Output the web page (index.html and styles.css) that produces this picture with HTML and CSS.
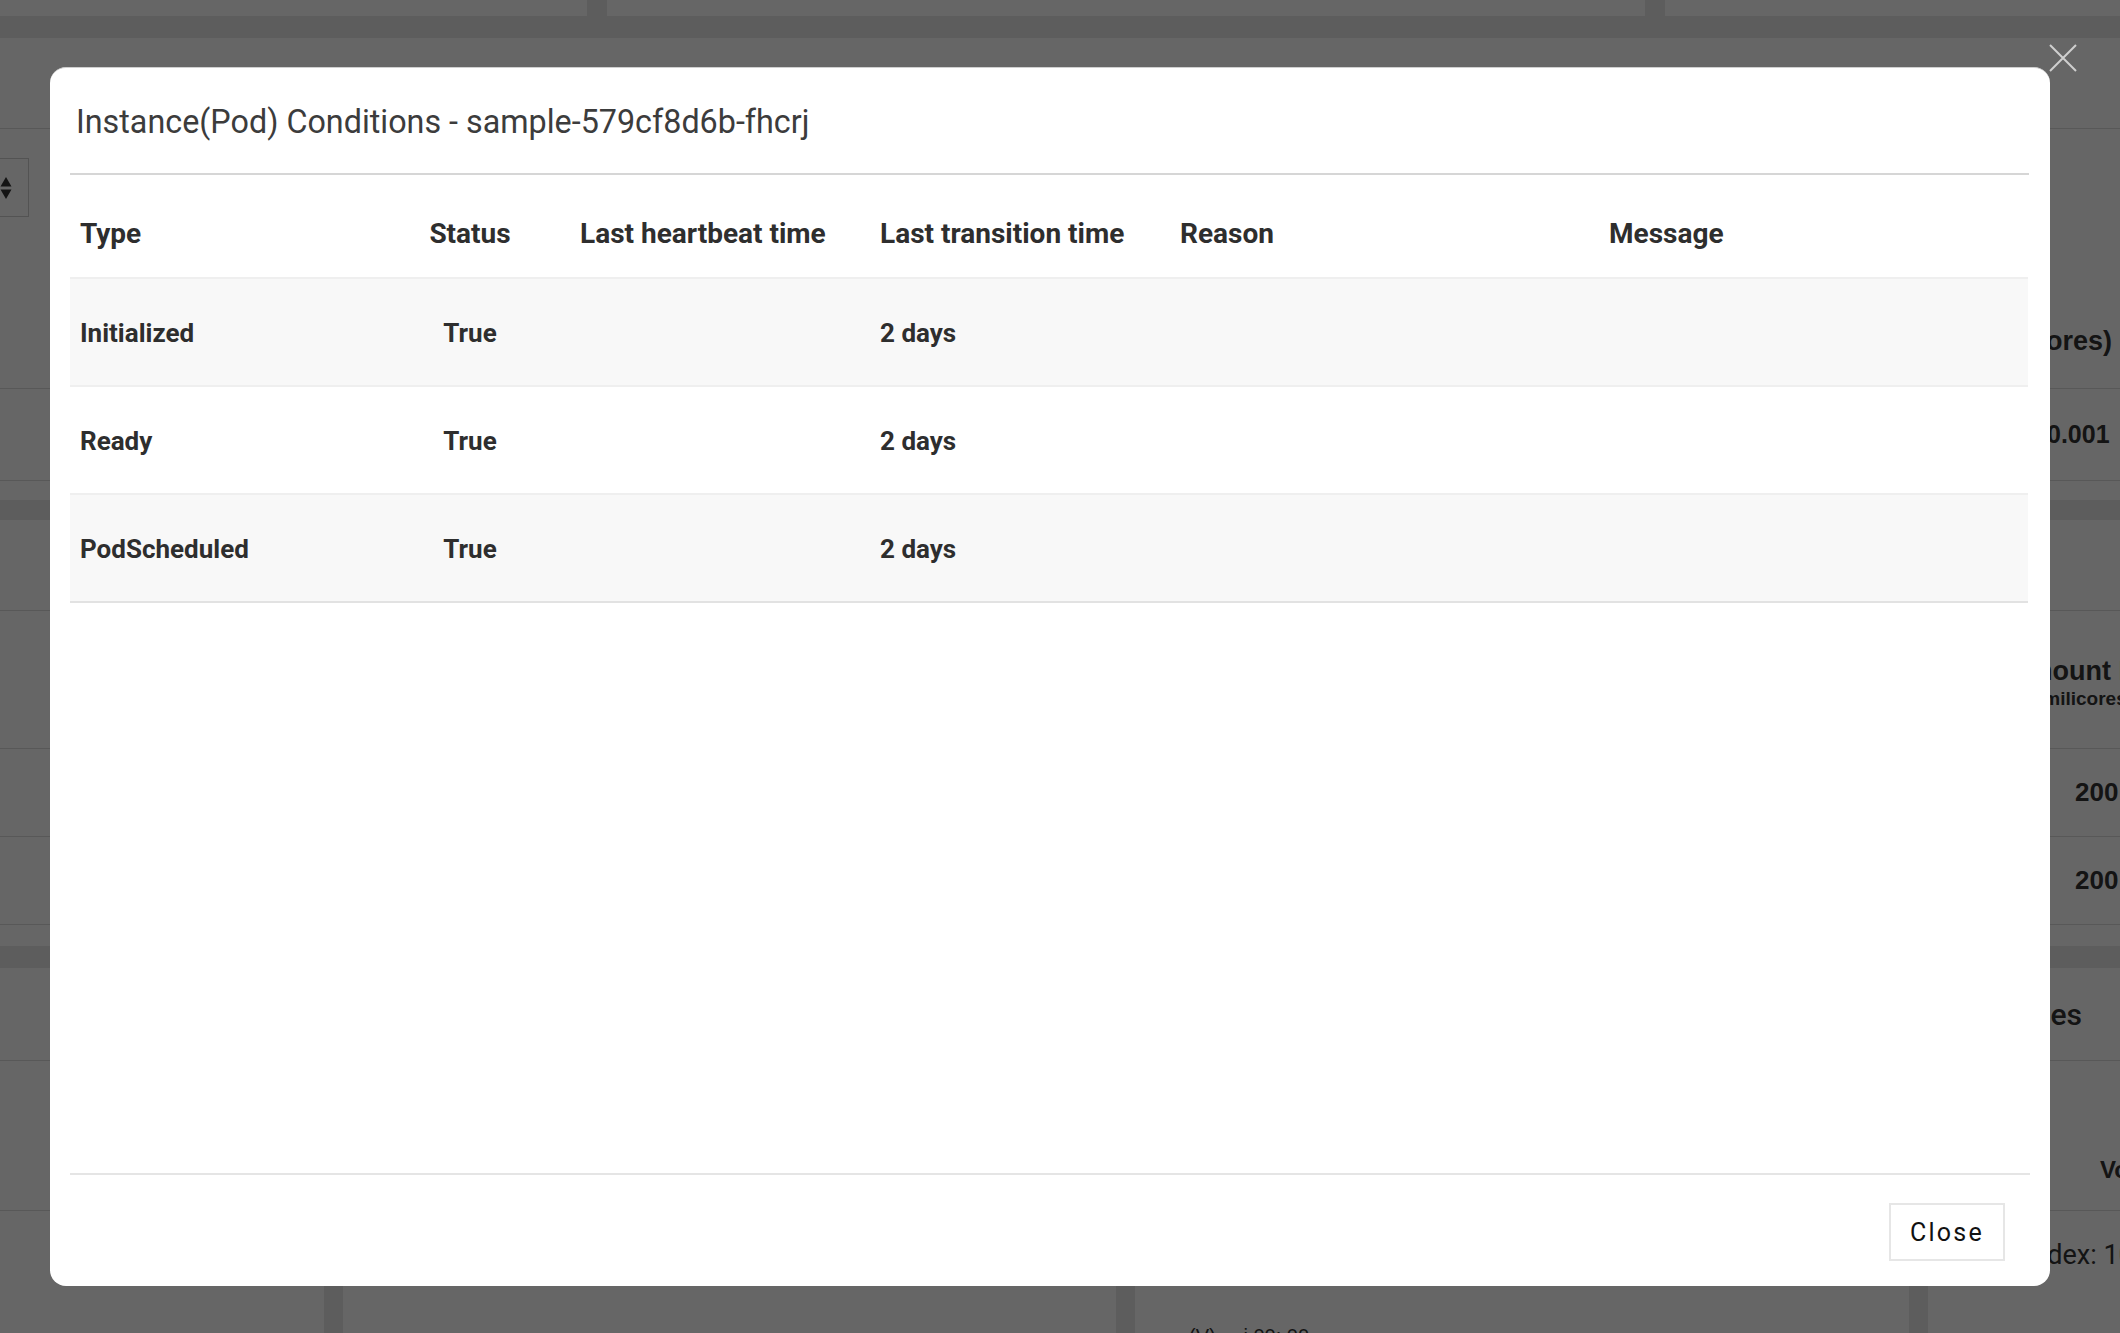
FILE: index.html
```html
<!DOCTYPE html>
<html lang="en">
<head>
<meta charset="utf-8">
<title>Instance(Pod) Conditions</title>
<link rel="stylesheet" href="styles.css">
</head>
<body>
<div class="page">
  <div class="top-cards">
    <div class="card"></div>
    <div class="card"></div>
    <div class="card"></div>
  </div>

  <section class="card sec sec-a">
    <div class="sec-head"></div>
    <div class="sec-tools">
      <div class="select-box">
        <svg class="sort-ico" width="12" height="24" viewBox="0 0 12 24"><path d="M6 1 L11.5 10.5 L0.5 10.5 Z M0.5 13.5 L11.5 13.5 L6 23 Z" fill="#333"/></svg>
      </div>
      <div class="bg-th">CPU Usage (milicores)</div>
    </div>
    <div class="bg-row"><span class="bg-num">0.001</span></div>
  </section>

  <section class="card sec sec-b">
    <div class="sec-head"></div>
    <div class="bg-thead">
      <div class="bg-th2">Amount Requests</div>
      <div class="bg-sub">(milicores)</div>
    </div>
    <div class="bg-row b-row"><span class="bg-num">200</span></div>
    <div class="bg-row b-row"><span class="bg-num">200</span></div>
  </section>

  <section class="card sec sec-c">
    <div class="sec-head c-head"><span class="bg-title">Volumes</span></div>
    <div class="c-thead"><span class="bg-vol">Volume</span></div>
    <div class="c-grid">
      <div class="cell"></div>
      <div class="cell"></div>
      <div class="cell"><span class="bg-small">(V) ... i 00: 00</span></div>
      <div class="cell"><span class="bg-index">Index: 10</span></div>
    </div>
  </section>
</div>

<div class="backdrop"></div>

<button class="x-close" aria-label="Close">
  <svg width="28" height="28" viewBox="0 0 28 28"><path d="M1 1 L27 27 M27 1 L1 27" stroke="#cfcfcf" stroke-width="2" fill="none"/></svg>
</button>

<div class="modal" role="dialog">
  <div class="modal-header">
    <h4 class="modal-title">Instance(Pod) Conditions - sample-579cf8d6b-fhcrj</h4>
  </div>
  <div class="modal-body">
    <table class="cond-table">
      <colgroup>
        <col class="c1"><col class="c2"><col class="c3"><col class="c4"><col class="c5"><col class="c6">
      </colgroup>
      <thead>
        <tr>
          <th>Type</th>
          <th class="center">Status</th>
          <th>Last heartbeat time</th>
          <th>Last transition time</th>
          <th>Reason</th>
          <th>Message</th>
        </tr>
      </thead>
      <tbody>
        <tr class="odd">
          <td>Initialized</td><td class="center">True</td><td></td><td>2 days</td><td></td><td></td>
        </tr>
        <tr>
          <td>Ready</td><td class="center">True</td><td></td><td>2 days</td><td></td><td></td>
        </tr>
        <tr class="odd">
          <td>PodScheduled</td><td class="center">True</td><td></td><td>2 days</td><td></td><td></td>
        </tr>
      </tbody>
    </table>
  </div>
  <div class="modal-footer">
    <button class="btn-close">Close</button>
  </div>
</div>
</body>
</html>
```

FILE: styles.css
```css
* { box-sizing: border-box; }

html, body {
  margin: 0;
  padding: 0;
}

body {
  width: 2120px;
  height: 1333px;
  overflow: hidden;
  position: relative;
  background: #e8e8e8;
  font-family: Roboto, "Liberation Sans", Arial, sans-serif;
  color: #333;
}

/* ---------- underlying page ---------- */
.page {
  display: flex;
  flex-direction: column;
  width: 2120px;
  height: 1333px;
  overflow: hidden;
}

.card { background: #fff; }

.top-cards {
  display: grid;
  grid-template-columns: 587px 1038px 1fr;
  column-gap: 20px;
  height: 16px;
  margin-bottom: 22px;
  flex: none;
}

.sec {
  display: flex;
  flex-direction: column;
  overflow: hidden;
  font-family: "Liberation Sans", Arial, sans-serif;
  color: #333;
}

.sec-a { height: 462px; margin-bottom: 20px; flex: none; }
.sec-b { height: 426px; margin-bottom: 22px; flex: none; }
.sec-c { flex: 1; }

.sec-head {
  height: 91px;
  border-bottom: 1px solid #dcdcdc;
  flex: none;
}

.sec-tools {
  height: 260px;
  border-bottom: 1px solid #dcdcdc;
  display: flex;
  flex-direction: column;
  justify-content: space-between;
  padding: 29px 8px 32px 0;
  flex: none;
}

.select-box {
  width: 89px;
  height: 59px;
  margin-left: -60px;
  border: 1px solid #cfcfcf;
  display: flex;
  align-items: center;
  padding-left: 59px;
}

.sort-ico { display: block; }

.bg-th {
  align-self: flex-end;
  font-weight: 700;
  font-size: 27px;
  line-height: 30px;
}

.bg-row {
  height: 92px;
  border-bottom: 1px solid #dcdcdc;
  display: flex;
  align-items: center;
  padding-left: 2047px;
  flex: none;
  overflow: hidden;
}

.bg-num {
  font-size: 25px;
  font-weight: 700;
  white-space: nowrap;
}

.bg-thead {
  height: 138px;
  border-bottom: 1px solid #dcdcdc;
  display: flex;
  flex-direction: column;
  padding-top: 44px;
  flex: none;
  overflow: hidden;
}

.bg-th2 {
  font-weight: 700;
  font-size: 27px;
  line-height: 32px;
  padding-left: 2009px;
  white-space: nowrap;
}

.bg-sub {
  font-weight: 700;
  font-size: 19px;
  line-height: 24px;
  padding-left: 2037px;
  white-space: nowrap;
}

.b-row { height: 88px; padding-left: 2075px; }
.b-row .bg-num { font-size: 26px; }

.c-head {
  height: 93px;
  display: flex;
  align-items: center;
  justify-content: flex-end;
  padding-right: 38px;
}

.bg-title {
  font-family: Roboto, sans-serif;
  font-weight: 500;
  font-size: 30px;
}

.c-thead {
  height: 150px;
  border-bottom: 1px solid #dcdcdc;
  display: flex;
  align-items: flex-end;
  padding-bottom: 26px;
  padding-left: 2100px;
  flex: none;
  overflow: hidden;
}

.bg-vol {
  font-weight: 700;
  font-size: 24px;
  white-space: nowrap;
}

.c-grid {
  flex: 1;
  display: grid;
  grid-template-columns: 324px 773px 774px 1fr;
  column-gap: 19px;
  background: #e8e8e8;
}

.cell {
  background: #fff;
  overflow: hidden;
  padding-top: 28px;
}

.cell:nth-child(3) { padding: 114px 0 0 54px; }
.cell:nth-child(4) { padding-left: 97px; }

.bg-small {
  font-size: 20px;
  white-space: nowrap;
}

.bg-index {
  font-family: Roboto, sans-serif;
  font-size: 27px;
  white-space: nowrap;
}

/* ---------- overlay ---------- */
.backdrop {
  position: absolute;
  inset: 0;
  background: rgba(0, 0, 0, 0.6);
}

.x-close {
  position: absolute;
  left: 2049px;
  top: 44px;
  width: 28px;
  height: 28px;
  padding: 0;
  border: 0;
  background: transparent;
}

.x-close svg { display: block; }

.modal {
  position: absolute;
  left: 50px;
  top: 67px;
  width: 2000px;
  height: 1219px;
  background: #fff;
  border-radius: 16px;
  border-top: 1px solid #cfcfcf;
  display: flex;
  flex-direction: column;
}

.modal-header {
  margin: 0 21px 0 20px;
  height: 107px;
  border-bottom: 2px solid #d6d6d6;
  display: flex;
  align-items: center;
  padding: 3px 6px 0;
  flex: none;
}

.modal-title {
  margin: 0;
  font-family: Roboto, sans-serif;
  font-weight: 400;
  font-size: 32.3px;
  color: #3c3c3c;
}

.modal-body {
  flex: 1;
  padding: 12px 22px 0 20px;
}

.cond-table {
  width: 100%;
  table-layout: fixed;
  border-collapse: separate;
  border-spacing: 0;
  font-family: Roboto, sans-serif;
  color: #2e2e2e;
}

.c1 { width: 300px; }
.c2 { width: 200px; }
.c3 { width: 300px; }
.c4 { width: 300px; }
.c5 { width: 429px; }
.c6 { width: auto; }

.cond-table th {
  height: 92px;
  padding: 2px 10px 0;
  text-align: left;
  font-size: 28px;
  font-weight: 700;
  border-bottom: 2px solid #efefef;
  white-space: nowrap;
}

.cond-table td {
  height: 108px;
  padding: 2px 10px 0;
  font-size: 26px;
  font-weight: 700;
  border-bottom: 2px solid #efefef;
  white-space: nowrap;
}

.cond-table tbody tr:last-child td { border-bottom-color: #e2e2e2; }

.cond-table tr.odd td { background: #f8f8f8; }

.cond-table .center { text-align: center; }

.modal-footer {
  margin: 0 20px;
  border-top: 2px solid #e5e5e5;
  height: 113px;
  display: flex;
  justify-content: flex-end;
  align-items: flex-start;
  padding: 28px 25px 0 0;
  flex: none;
}

.btn-close {
  width: 116px;
  height: 58px;
  background: #fff;
  border: 2px solid #e6e6e6;
  font-family: Roboto, sans-serif;
  font-size: 25px;
  font-weight: 400;
  letter-spacing: 2.2px;
  color: #111;
  padding: 0;
}
```
